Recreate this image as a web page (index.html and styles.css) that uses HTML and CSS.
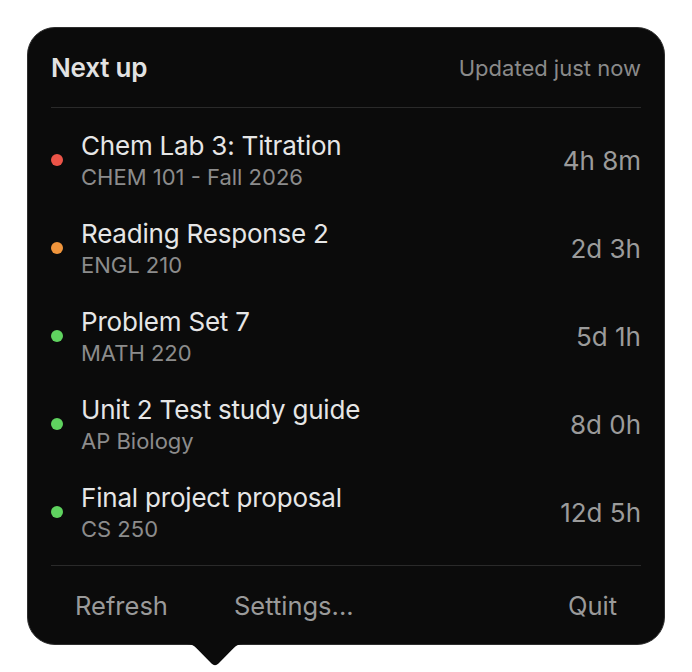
FILE: index.html
```html
<!DOCTYPE html>
<html>
<head>
    <title>Next up</title>
    <link rel="stylesheet" href="styles.css">
</head>
<body>

<div class="popover">
    <div class="header">
        <span class="heading">Next up</span>
        <span class="updated">Updated just now</span>
    </div>

    <ul class="tasks">
        <li class="task">
            <span class="dot red"></span>
            <div class="info">
                <div class="title">Chem Lab 3: Titration</div>
                <div class="course">CHEM 101 - Fall 2026</div>
            </div>
            <span class="due">4h 8m</span>
        </li>
        <li class="task">
            <span class="dot orange"></span>
            <div class="info">
                <div class="title">Reading Response 2</div>
                <div class="course">ENGL 210</div>
            </div>
            <span class="due">2d 3h</span>
        </li>
        <li class="task">
            <span class="dot green"></span>
            <div class="info">
                <div class="title">Problem Set 7</div>
                <div class="course">MATH 220</div>
            </div>
            <span class="due">5d 1h</span>
        </li>
        <li class="task">
            <span class="dot green"></span>
            <div class="info">
                <div class="title">Unit 2 Test study guide</div>
                <div class="course">AP Biology</div>
            </div>
            <span class="due">8d 0h</span>
        </li>
        <li class="task">
            <span class="dot green"></span>
            <div class="info">
                <div class="title">Final project proposal</div>
                <div class="course">CS 250</div>
            </div>
            <span class="due">12d 5h</span>
        </li>
    </ul>

    <div class="footer">
        <button class="action">Refresh</button>
        <button class="action">Settings...</button>
        <button class="action quit">Quit</button>
    </div>

    <!-- the little arrow pointing down, with soft shoulders -->
    <svg class="tail" width="56" height="24" viewBox="0 0 56 24">
        <path d="M0 0 C4 0 6.5 1.2 9.5 4.2 L24.5 19.5 Q28 23 31.5 19.5 L46.5 4.2 C49.5 1.2 52 0 56 0 Z" fill="#0b0b0b"/>
    </svg>
</div>

</body>
</html>
```

FILE: styles.css
```css
html, body {
    margin: 0;
    height: 100%;
    background: #ffffff;
}
body {
    padding: 27px 0 0 27px;
    box-sizing: border-box;
    min-height: 672px;
    font-family: Inter, "Liberation Sans", sans-serif;
}

.popover {
    position: relative;
    width: 636px;
    height: 616px;
    background: #0b0b0b;
    border: 1px solid #2e2e2e;
    border-radius: 28px;
    display: flex;
    flex-direction: column;
}

.header {
    margin: 0 23px;
    height: 79px;
    border-bottom: 1px solid #2a2a2a;
    display: flex;
    align-items: center;
    justify-content: space-between;
}
.heading {
    color: #e2e2e2;
    font-size: 26px;
    font-weight: 600;
    letter-spacing: -0.2px;
}
.updated {
    color: #8a8a8a;
    font-size: 22px;
}

.tasks {
    list-style: none;
    margin: 0 23px;
    padding: 8px 0 9px;
    border-bottom: 1px solid #2a2a2a;
}
.task {
    height: 88px;
    display: flex;
    align-items: center;
}
.dot {
    width: 12px;
    height: 12px;
    border-radius: 50%;
    margin: 0 18px 0 0;
    flex: none;
}
.red    { background: #ec5448; }
.orange { background: #f0953c; }
.green  { background: #5fd35f; }

.info {
    flex: 1;
    display: flex;
    flex-direction: column;
    gap: 3px;
}
.title {
    color: #e6e6e6;
    font-size: 26px;
    line-height: 30px;
    letter-spacing: -0.2px;
}
.course {
    color: #8c8c8c;
    font-size: 22px;
    line-height: 26px;
}
.due {
    color: #9b9b9b;
    font-size: 26px;
}

.footer {
    flex: 1;
    display: flex;
    align-items: center;
    gap: 18px;
    padding: 0 23px;
}
.action {
    background: none;
    border: none;
    padding: 0 24px;
    font-family: inherit;
    font-size: 25.5px;
    color: #9a9a9a;
}
.quit {
    margin-left: auto;
}

.tail {
    position: absolute;
    left: 159px;
    top: 616px;
}
```
